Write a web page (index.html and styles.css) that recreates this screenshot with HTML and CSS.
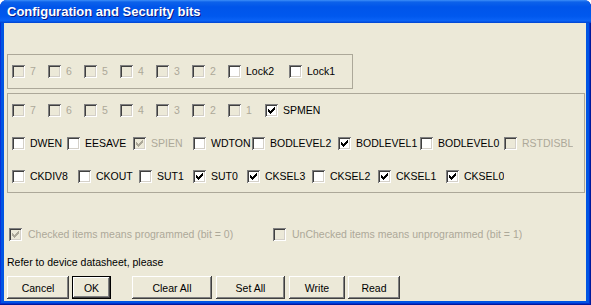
FILE: index.html
```html
<!DOCTYPE html>
<html lang="en">
<head>
    <meta charset="UTF-8">
    <title>Configuration and Security bits</title>
    <link rel="stylesheet" href="styles.css">
</head>
<body>
<svg width="0" height="0" class="defs">
    <symbol id="tick" viewBox="0 0 7 7">
        <path d="M6 0h1v1h-1z M5 1h2v1h-2z M0 2h1v1h-1z M4 2h3v1h-3z M0 3h2v1h-2z M3 3h3v1h-3z M0 4h5v1h-5z M1 5h3v1h-3z M2 6h1v1h-1z"/>
    </symbol>
</svg>
<div class="window">
    <div class="titlebar">Configuration and Security bits</div>
    <div class="client">
        <div class="group lock">
            <div class="row">
                <label class="cb off w36"><span class="box"></span><span class="txt">7</span></label>
                <label class="cb off w36"><span class="box"></span><span class="txt">6</span></label>
                <label class="cb off w36"><span class="box"></span><span class="txt">5</span></label>
                <label class="cb off w36"><span class="box"></span><span class="txt">4</span></label>
                <label class="cb off w36"><span class="box"></span><span class="txt">3</span></label>
                <label class="cb off w36"><span class="box"></span><span class="txt">2</span></label>
                <label class="cb" style="width:61px"><span class="box"></span><span class="txt">Lock2</span></label>
                <label class="cb"><span class="box"></span><span class="txt">Lock1</span></label>
            </div>
        </div>
        <div class="group fuses">
            <div class="row">
                <label class="cb off w36"><span class="box"></span><span class="txt">7</span></label>
                <label class="cb off w36"><span class="box"></span><span class="txt">6</span></label>
                <label class="cb off w36"><span class="box"></span><span class="txt">5</span></label>
                <label class="cb off w36"><span class="box"></span><span class="txt">4</span></label>
                <label class="cb off w36"><span class="box"></span><span class="txt">3</span></label>
                <label class="cb off w36"><span class="box"></span><span class="txt">2</span></label>
                <label class="cb off" style="width:37px"><span class="box"></span><span class="txt">1</span></label>
                <label class="cb on"><span class="box"><svg><use href="#tick"/></svg></span><span class="txt">SPMEN</span></label>
            </div>
            <div class="row">
                <label class="cb" style="width:55px"><span class="box"></span><span class="txt">DWEN</span></label>
                <label class="cb" style="width:66px"><span class="box"></span><span class="txt">EESAVE</span></label>
                <label class="cb on off" style="width:60px"><span class="box"><svg><use href="#tick"/></svg></span><span class="txt">SPIEN</span></label>
                <label class="cb" style="width:59px"><span class="box"></span><span class="txt">WDTON</span></label>
                <label class="cb" style="width:86px"><span class="box"></span><span class="txt">BODLEVEL2</span></label>
                <label class="cb on" style="width:82px"><span class="box"><svg><use href="#tick"/></svg></span><span class="txt">BODLEVEL1</span></label>
                <label class="cb" style="width:84px"><span class="box"></span><span class="txt">BODLEVEL0</span></label>
                <label class="cb off"><span class="box"></span><span class="txt">RSTDISBL</span></label>
            </div>
            <div class="row">
                <label class="cb" style="width:66px"><span class="box"></span><span class="txt">CKDIV8</span></label>
                <label class="cb" style="width:61px"><span class="box"></span><span class="txt">CKOUT</span></label>
                <label class="cb" style="width:54px"><span class="box"></span><span class="txt">SUT1</span></label>
                <label class="cb on" style="width:54px"><span class="box"><svg><use href="#tick"/></svg></span><span class="txt">SUT0</span></label>
                <label class="cb on" style="width:65px"><span class="box"><svg><use href="#tick"/></svg></span><span class="txt">CKSEL3</span></label>
                <label class="cb" style="width:66px"><span class="box"></span><span class="txt">CKSEL2</span></label>
                <label class="cb on" style="width:68px"><span class="box"><svg><use href="#tick"/></svg></span><span class="txt">CKSEL1</span></label>
                <label class="cb on"><span class="box"><svg><use href="#tick"/></svg></span><span class="txt">CKSEL0</span></label>
            </div>
        </div>
        <div class="row legend">
            <label class="cb on off wide" style="width:264px"><span class="box"><svg><use href="#tick"/></svg></span><span class="txt">Checked items means programmed (bit = 0)</span></label>
            <label class="cb off wide"><span class="box"></span><span class="txt">UnChecked items means unprogrammed (bit = 1)</span></label>
        </div>
        <p class="note">Refer to device datasheet, please</p>
        <div class="buttons">
            <button class="btn cancel">Cancel</button>
            <button class="btn ok">OK</button>
            <button class="btn clear">Clear All</button>
            <button class="btn setall">Set All</button>
            <button class="btn write">Write</button>
            <button class="btn read">Read</button>
        </div>
    </div>
</div>
</body>
</html>
```

FILE: styles.css
```css
body {
    margin: 0;
    background: #fff;
    font-family: "Liberation Sans", Arial, sans-serif;
    font-size: 10.5px;
}
.defs {
    position: absolute;
}
.window {
    display: flex;
    flex-direction: column;
    width: 591px;
    height: 305px;
    background: #0054e3;
    border-radius: 7px 7px 0 0;
    box-shadow: inset -1px -1px #001a9c, inset -2px -2px #0030d0, inset 1px 0 #0831d9;
}
.titlebar {
    height: 23px;
    padding-left: 7px;
    line-height: 24px;
    border-radius: 7px 7px 0 0;
    background: linear-gradient(#3d8ff8 0, #0d62ea 2px, #0055ea 30%, #0058ee 70%, #0a63f6 90%, #0042cf 100%);
    color: #fff;
    font-weight: bold;
    font-size: 13px;
    text-shadow: 1px 1px #0a1883;
}
.client {
    flex: 1;
    margin: 0 5px 4px 4px;
    background: #ece9d8;
}
.group {
    border: 1px solid #aca899;
    padding: 10px 0 10px 4px;
    margin-left: 3px;
}
.lock {
    width: 340px;
    margin-top: 31px;
}
.fuses {
    margin-top: 4px;
    margin-right: 1px;
    padding-bottom: 9px;
    display: flex;
    flex-direction: column;
    gap: 20px;
}
.row {
    display: flex;
    height: 13px;
}
.cb {
    display: flex;
    align-items: center;
    height: 13px;
    overflow: hidden;
    white-space: nowrap;
    flex-shrink: 0;
}
.w36 {
    width: 36px;
}
.cb .box {
    position: relative;
    width: 13px;
    height: 13px;
    flex-shrink: 0;
    background: #fff;
    box-shadow: inset 1px 1px #808080, inset -1px -1px #fff, inset 2px 2px #404040, inset -2px -2px #d4d0c8;
}
.cb .box svg {
    position: absolute;
    left: 3px;
    top: 3px;
    width: 7px;
    height: 7px;
    fill: #000;
}
.cb .txt {
    margin-left: 5px;
    line-height: 13px;
}
.cb.off .box {
    background: #ece9d8;
}
.cb.off .box svg {
    fill: #aca899;
}
.cb.off .txt {
    color: #aca899;
}
.legend {
    margin-top: 35px;
    padding-left: 5px;
}
.legend .txt {
    margin-left: 6px;
}
.note {
    margin: 15px 0 0 3px;
    height: 13px;
    line-height: 13px;
}
.buttons {
    display: flex;
    margin-top: 7px;
    padding-left: 3px;
}
.btn {
    height: 23px;
    padding: 0;
    border: none;
    outline: none;
    background: #ece9d8;
    color: #000;
    font-family: "Liberation Sans", Arial, sans-serif;
    font-size: 10.5px;
    box-shadow: inset -1px -1px #404040, inset 1px 1px #fff, inset -2px -2px #808080;
}
.btn.ok {
    box-shadow: inset 0 0 0 1px #000, inset -2px -2px #404040, inset 2px 2px #fff, inset -3px -3px #808080;
}
.cancel { width: 62px; }
.ok { width: 39px; margin-left: 3px; }
.clear { width: 80px; margin-left: 21px; }
.setall { width: 69px; margin-left: 4px; }
.write { width: 56px; margin-left: 4px; }
.read { width: 52px; margin-left: 3px; }
```
